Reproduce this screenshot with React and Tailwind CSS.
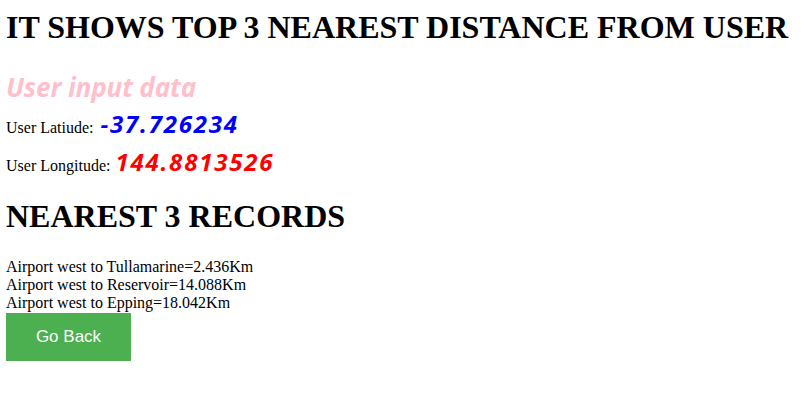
export default function App() {
  const records = [
    'Airport west to Tullamarine=2.436Km',
    'Airport west to Reservoir=14.088Km',
    'Airport west to Epping=18.042Km',
  ]

  return (
    <div className="w-[812px] h-[402px] bg-white px-[6px] font-['Liberation_Serif',serif] text-black">
      {/* Title */}
      <h1 className="mt-[7px] h-[40px] text-[32px] leading-[40px] font-bold whitespace-nowrap">
        IT SHOWS TOP 3 NEAREST DISTANCE FROM USER
      </h1>

      {/* User input */}
      <h2 className="mt-[24px] h-[32px] text-[26px] leading-[32px] font-bold italic text-[#ffc0cb] font-['Open_Sans',sans-serif] tracking-[-0.1px]">
        User input data
      </h2>
      <div className="mt-[7px] h-[28px] flex items-baseline gap-[7px]">
        <span className="text-[16px] leading-[20px]">User Latiude:</span>
        <span className="text-[24px] leading-[28px] font-bold italic text-[#0000ff] font-['Open_Sans',sans-serif] tracking-[1.8px]">-37.726234</span>
      </div>
      <div className="mt-[9.5px] h-[28px] flex items-baseline gap-[5px]">
        <span className="text-[16px] leading-[20px]">User Longitude:</span>
        <span className="text-[24px] leading-[28px] font-bold italic text-[#ff0000] font-['Open_Sans',sans-serif] tracking-[1.8px]">144.8813526</span>
      </div>

      {/* Results */}
      <h2 className="mt-[22.7px] h-[36px] text-[32px] leading-[36px] font-bold whitespace-nowrap">
        NEAREST 3 RECORDS
      </h2>
      <div className="mt-[24.25px] text-[16px] leading-[17.7px]">
        {records.map((r) => (
          <div key={r}>{r}</div>
        ))}
      </div>
      <button className="mt-[1.45px] w-[125px] h-[48px] bg-[#4caf50] text-white text-[17px] font-['Liberation_Sans',sans-serif] flex items-center justify-center">
        Go Back
      </button>
    </div>
  )
}
